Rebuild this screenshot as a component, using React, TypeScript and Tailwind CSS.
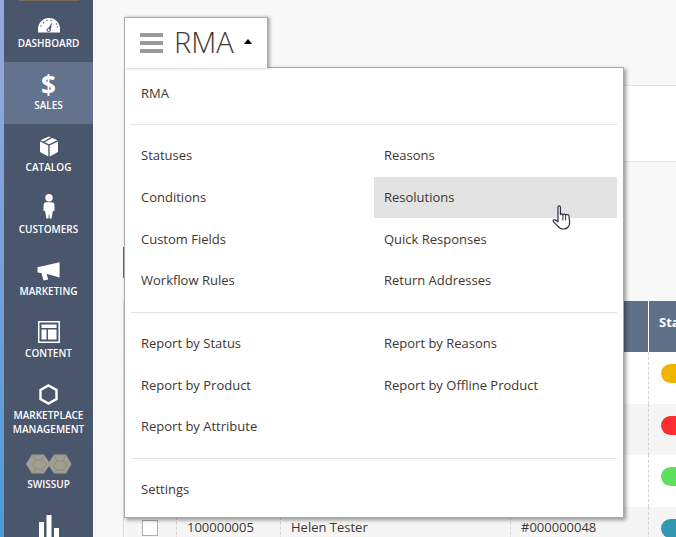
const font = "font-['Open_Sans',sans-serif]"

function Gauge() {
  return (
    <svg width="24" height="17" viewBox="0 0 24 17">
      <path d="M1 16.5 V13 A11 11 0 0 1 23 13 V16.5 Z" fill="#fff" />
      <path d="M9.6 14.6 L15.4 6 L13.2 15.4 Z" fill="#4a566c" />
      <circle cx="11.6" cy="14" r="1.6" fill="#fff" stroke="#4a566c" strokeWidth="1" />
      <g fill="#4a566c">
        <circle cx="4" cy="10" r=".7" />
        <circle cx="6.5" cy="6.5" r=".7" />
        <circle cx="10" cy="4.5" r=".7" />
        <circle cx="14" cy="4.5" r=".7" />
        <circle cx="19.5" cy="8" r=".7" />
        <circle cx="20.5" cy="11" r=".7" />
      </g>
    </svg>
  )
}

function Box() {
  return (
    <svg width="20" height="21" viewBox="0 0 20 21">
      <path d="M1 5.6 L9.3 9.4 V20.6 L1 16 Z" fill="#fff" />
      <path d="M19 5.6 L10.7 9.4 V20.6 L19 16 Z" fill="#fff" />
      <path d="M10 .4 L12 1.3 L4.2 5.4 L1.6 4.3 Z" fill="#fff" />
      <path d="M13.4 2 L18.4 4.3 L10 8.2 L5.6 6.2 Z" fill="#fff" />
    </svg>
  )
}

function Person() {
  return (
    <svg width="12" height="25" viewBox="0 0 12 25">
      <circle cx="6" cy="3.8" r="3.7" fill="#fff" />
      <path d="M2.6 8.2 H9.4 Q11.2 8.4 11.4 10.4 L11.6 16.6 L9.8 17.2 L8.6 24.4 H6.6 L6 19 L5.4 24.4 H3.4 L2.2 17.2 L.4 16.6 L.6 10.4 Q.8 8.4 2.6 8.2 Z" fill="#fff" />
    </svg>
  )
}

function Megaphone() {
  return (
    <svg width="24" height="19" viewBox="0 0 24 19">
      <path d="M.5 5.2 L22.6 .2 V15.4 L12 12.4 L9.6 11.8 L11.2 17.6 L6.6 18.6 L4.4 11 L.5 10.4 Z" fill="#fff" />
    </svg>
  )
}

function Layout() {
  return (
    <svg width="22" height="22" viewBox="0 0 22 22">
      <rect x=".75" y=".75" width="20.5" height="20.5" fill="none" stroke="#fff" strokeWidth="1.5" />
      <rect x="3.5" y="3.5" width="15" height="3.5" fill="#fff" />
      <rect x="3.5" y="8.5" width="5" height="10" fill="#fff" />
      <rect x="10" y="8.5" width="8.5" height="10" fill="#fff" />
    </svg>
  )
}

function Hexagon() {
  return (
    <svg width="19" height="21" viewBox="0 0 19 21">
      <path d="M9.5 1.5 L17.5 6 V15 L9.5 19.5 L1.5 15 V6 Z" fill="none" stroke="#fff" strokeWidth="2.4" />
    </svg>
  )
}

function Swissup() {
  return (
    <svg width="46" height="20" viewBox="0 0 46 20">
      <path d="M0 10 L6 .5 H18 L23 8 L28 .5 H40 L45.5 10 L40 19.5 H28 L23 12 L18 19.5 H6 Z" fill="#a09d92" />
      <g fill="none" stroke="#8a877c" strokeWidth=".8">
        <path d="M6 .5 L10 6 H16 L18 .5 M10 6 L6 10 L10 15 H16 L21 10 L16 6 M6 19.5 L10 15 M18 19.5 L16 15" />
        <path d="M28 .5 L31 7 H37 L40 .5 M31 7 L27 12 L31 16 H38 L41 10 L37 7 M28 19.5 L31 16" />
      </g>
    </svg>
  )
}

function Bars() {
  return (
    <svg width="20" height="22" viewBox="0 0 20 22">
      <rect x="0" y="7" width="5" height="15" fill="#fff" />
      <rect x="7.5" y="0" width="5" height="22" fill="#fff" />
      <rect x="15" y="13" width="5" height="9" fill="#fff" />
    </svg>
  )
}

function HandCursor() {
  return (
    <svg width="19" height="25" viewBox="0 0 19 25">
      <path
        d="M6 2 C6 .6 8.4 .6 8.4 2 V9.6 C8.4 8.6 11 8.6 11 9.8 C11 8.8 13.6 8.8 13.6 10.2 C13.6 9.4 16.8 9.4 17 11 L17.6 17 C17.8 21 15.6 24 11.6 24 C8.4 24 7 22.6 5.6 20.8 L1.4 16.6 C.6 15.6 1.8 14 3.2 14.8 L6 16.8 Z"
        fill="#fff"
        stroke="#2b2f3d"
        strokeWidth="1.2"
        strokeLinejoin="round"
      />
      <path d="M10.9 10 V15.4 M13.6 10.4 V15.4" fill="none" stroke="#2b2f3d" strokeWidth="1" />
    </svg>
  )
}

function NavItem({ icon, label, active }: { icon: React.ReactNode; label: string; active?: boolean }) {
  return (
    <div className={`h-[62px] flex flex-col items-center ${active ? "bg-[#63738e]" : ""}`}>
      <div className="h-[36px] flex items-end justify-center pb-[3px]">{icon}</div>
      <div className="text-[10px] leading-[14px] font-semibold text-white text-center">{label}</div>
    </div>
  )
}

function Sidebar() {
  return (
    <div className="w-[89px] h-full shrink-0 bg-[#4a566c] overflow-hidden">
      <div className="w-[60px] h-px ml-[15px] bg-[#7a6a58]" />
      <div className="mt-[-1px]">
        <NavItem icon={<Gauge />} label="DASHBOARD" />
        <NavItem active label="SALES" icon={<span className="text-[26px] leading-[20px] font-bold text-white">$</span>} />
        <NavItem icon={<Box />} label="CATALOG" />
        <NavItem icon={<Person />} label="CUSTOMERS" />
        <NavItem icon={<Megaphone />} label="MARKETING" />
        <NavItem icon={<Layout />} label="CONTENT" />
        <div className="h-[70px] flex flex-col items-center">
          <div className="h-[36px] flex items-end justify-center pb-[3px]">
            <Hexagon />
          </div>
          <div className="text-[10px] leading-[14px] font-semibold text-white text-center">
            MARKETPLACE
            <br />
            MANAGEMENT
          </div>
        </div>
        <div className="h-[66px] flex flex-col items-center">
          <div className="h-[35px] flex items-end justify-center pb-[3px]">
            <Swissup />
          </div>
          <div className="text-[10px] leading-[14px] font-semibold text-white text-center">SWISSUP</div>
        </div>
        <div className="flex justify-center mt-[7px]">
          <Bars />
        </div>
      </div>
    </div>
  )
}

const rows = [
  { color: "bg-[#f0b400]", bg: "bg-white", h: "h-[52px]" },
  { color: "bg-[#ff2d2d]", bg: "bg-[#f5f5f5]", h: "h-[51px]" },
  { color: "bg-[#5de05d]", bg: "bg-white", h: "h-[52px]" },
  { color: "bg-[#3399b3]", bg: "bg-[#f5f5f5]", h: "h-[52px]", id: "100000005", name: "Helen Tester", order: "#000000048" },
]

function Grid() {
  return (
    <div className="w-[620px] border-l border-[#dcdcdc]">
      <div className="grid grid-cols-[52px_104px_230px_138px_1fr] h-[51px] bg-[#5f7089] text-white text-[13px] font-bold">
        <div />
        <div />
        <div />
        <div />
        <div className="border-l border-white pl-[10px] pt-[12px]">Status</div>
      </div>
      {rows.map((r, i) => (
        <div key={i} className={`grid grid-cols-[52px_104px_230px_138px_1fr] text-[13px] text-[#41362f] ${r.bg} ${r.h}`}>
          <div className="pl-[18px] pt-[13px]">
            {r.id && <div className="w-[16px] h-[16px] border border-[#adadad] bg-white" />}
          </div>
          <div className="border-l border-dashed border-[#d1d1d1] pl-[10px] pt-[11px]">{r.id}</div>
          <div className="border-l border-dashed border-[#d1d1d1] pl-[10px] pt-[11px]">{r.name}</div>
          <div className="border-l border-dashed border-[#d1d1d1] pl-[10px] pt-[11px]">{r.order}</div>
          <div className="border-l border-dashed border-[#d1d1d1] pl-[12px] pt-[12px]">
            <div className={`w-[70px] h-[19px] rounded-[10px] ${r.color}`} />
          </div>
        </div>
      ))}
    </div>
  )
}

function MenuItem({ label, hover }: { label: string; hover?: boolean }) {
  return (
    <div className={`relative h-[41.67px] flex items-center px-[10px] text-[13px] text-[#41362f] ${hover ? "bg-[#e3e3e3]" : ""}`}>
      {label}
      {hover && (
        <div className="absolute left-[178px] top-[28px]">
          <HandCursor />
        </div>
      )}
    </div>
  )
}

function Divider() {
  return <div className="h-px bg-[#e3e3e3] my-[10px]" />
}

function Menu() {
  return (
    <div className="absolute left-[124px] top-[17px] text-[#41362f]">
      <div className="relative z-10 w-[144px] h-[51px] bg-white border border-b-0 border-[#aaaaaa] shadow-[2px_0_3px_rgba(0,0,0,0.3)] flex items-center pl-[15px]">
        <div className="w-[23px] flex flex-col gap-[4px]">
          <div className="h-[4px] bg-[#999999]" />
          <div className="h-[4px] bg-[#999999]" />
          <div className="h-[4px] bg-[#999999]" />
        </div>
        <div className="text-[29px] leading-[34px] font-light ml-[11px] mb-[3px]">RMA</div>
        <div className="ml-[10px] mb-[4px] w-0 h-0 border-x-[4px] border-x-transparent border-b-[5px] border-b-black" />
      </div>
      <div className="relative mt-[-1px] w-[500px] h-[451px] bg-white border border-[#aaaaaa] shadow-[2px_2px_4px_rgba(0,0,0,0.4)] px-[6px] pt-[5px]">
        <MenuItem label="RMA" />
        <div className="h-px bg-[#e3e3e3] mt-[9.5px] mb-[10px]" />
        <div className="grid grid-cols-2">
          <MenuItem label="Statuses" />
          <MenuItem label="Reasons" />
          <MenuItem label="Conditions" />
          <MenuItem label="Resolutions" hover />
          <MenuItem label="Custom Fields" />
          <MenuItem label="Quick Responses" />
          <MenuItem label="Workflow Rules" />
          <MenuItem label="Return Addresses" />
        </div>
        <Divider />
        <div className="grid grid-cols-2">
          <MenuItem label="Report by Status" />
          <MenuItem label="Report by Reasons" />
          <MenuItem label="Report by Product" />
          <MenuItem label="Report by Offline Product" />
          <MenuItem label="Report by Attribute" />
        </div>
        <Divider />
        <MenuItem label="Settings" />
      </div>
    </div>
  )
}

export default function App() {
  return (
    <div className={`relative w-[676px] h-[537px] overflow-hidden flex bg-[#f8f8f8] ${font}`}>
      <div className="w-[4px] h-full shrink-0 bg-gradient-to-b from-[#9aa7d8] to-[#4a9ad8]" />
      <Sidebar />
      <div className="flex-1 min-w-0 pl-[30px]">
        <div className="mt-[85px] h-[77px] bg-white border-y border-[#e3e3e3]" />
        <div className="mt-[85px] w-[2px] h-[31px] bg-[#5f6b80]" />
        <div className="mt-[23px]">
          <Grid />
        </div>
      </div>
      <Menu />
    </div>
  )
}
